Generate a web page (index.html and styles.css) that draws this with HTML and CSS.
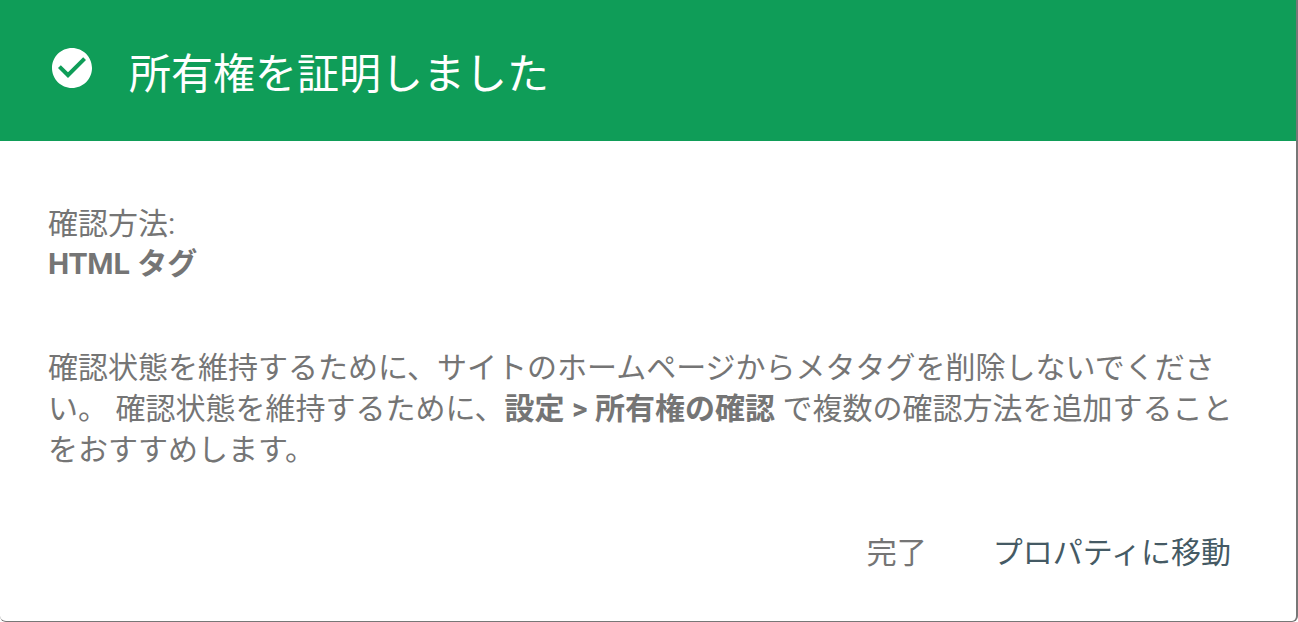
FILE: index.html
```html
<!DOCTYPE html>
<html lang="ja">
<head>
<meta charset="utf-8">
<title>所有権を証明しました</title>
<link rel="stylesheet" href="styles.css">
</head>
<body>
<div class="dialog">
  <header class="head">
    <svg class="check" viewBox="0 0 24 24" width="48" height="48"><path fill="#fff" d="M12 2C6.48 2 2 6.48 2 12s4.48 10 10 10 10-4.48 10-10S17.52 2 12 2zm-2 15-5-5 1.41-1.41L10 14.17l7.59-7.59L19 8l-9 9z"/></svg>
    <h1 class="title">所有権を証明しました</h1>
  </header>
  <main class="body">
    <p class="method">確認方法:<br><b>HTML タグ</b></p>
    <p class="note">確認状態を維持するために、サイトのホームページからメタタグを削除しないでください。 確認状態を維持するために、<b>設定 &gt; 所有権の確認</b> で複数の確認方法を追加することをおすすめします。</p>
  </main>
  <footer class="actions">
    <span class="btn done">完了</span>
    <span class="btn go">プロパティに移動</span>
  </footer>
</div>
</body>
</html>
```
FILE: styles.css
```css
html, body { margin: 0; padding: 0; background: #fff; }
body { width: 1298px; height: 622px; overflow: hidden; font-family: Roboto, "Noto Sans CJK JP", sans-serif; }
.dialog { width: 1296px; height: 621px; display: flex; flex-direction: column; background: #fff; border-right: 2px solid #777; border-bottom: 1px solid #777; border-bottom-left-radius: 6px; border-bottom-right-radius: 6px; }
.head { height: 141px; background: #0f9d58; display: flex; align-items: center; padding-left: 48px; box-sizing: border-box; gap: 33px; }
.check { flex: none; margin-top: -5px; }
.title { margin: 0; font-size: 42px; font-weight: 400; color: #fff; }
.body { padding: 63px 48px 0; color: #757575; font-size: 30px; line-height: 40px; }
.method { margin: 0 0 63px; }
.note { margin: 0; width: 1190px; line-height: 41px; }
.actions { margin-top: auto; display: flex; justify-content: flex-end; gap: 66px; padding: 0 65px 46px 0; font-size: 30px; line-height: 44px; }
.done { color: #757575; }
.go { color: #455a64; }
```
